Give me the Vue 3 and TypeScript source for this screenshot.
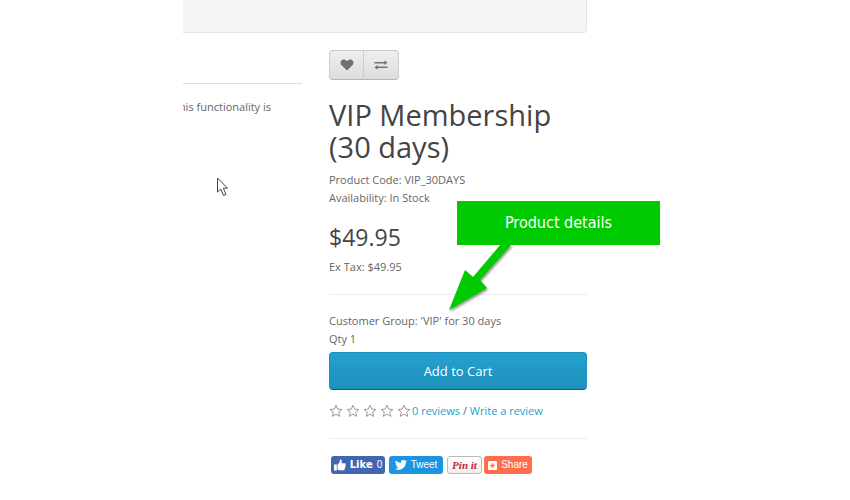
<script setup lang="ts">
import { ref } from 'vue'

const product = {
  name: 'VIP Membership (30 days)',
  code: 'VIP_30DAYS',
  availability: 'In Stock',
  price: '$49.95',
  exTax: '$49.95',
  group: "'VIP' for 30 days",
  reviews: 0,
}

const likes = ref(0)
const starPath =
  'M7 1.2 8.7 5.1 12.9 5.5 9.7 8.2 10.7 12.4 7 10.2 3.3 12.4 4.3 8.2 1.1 5.5 5.3 5.1Z'
</script>

<template>
  <main class="page">
    <div class="panel"></div>
    <div class="columns">
      <section class="description">
        <div class="tabs"></div>
        <p class="excerpt"><span>his functionality is</span></p>
      </section>

      <section class="product">
        <div class="tools">
          <button type="button" class="tool" aria-label="Add to Wish List">
            <svg width="14" height="12" viewBox="0 0 14 12">
              <path fill="#707070" d="M7 11.5 1.6 6.3C.2 4.8.2 2.6 1.4 1.4 2.9 0 5.6.3 7 2.4 8.4.3 11.1 0 12.6 1.4 13.8 2.6 13.8 4.800 12.400 6.300Z" />
            </svg>
          </button>
          <button type="button" class="tool" aria-label="Compare this Product">
            <svg width="14" height="10" viewBox="0 0 14 10">
              <path fill="#707070" d="M.5 2H10.500V.2L13.500 2.700 10.500 5V3.400H.5ZM13.500 6.600H3.500V5L.5 7.400 3.500 9.800V8H13.500Z" />
            </svg>
          </button>
        </div>

        <h1>{{ product.name }}</h1>
        <ul class="facts">
          <li>Product Code: {{ product.code }}</li>
          <li>Availability: {{ product.availability }}</li>
        </ul>
        <h2>{{ product.price }}</h2>
        <p class="tax">Ex Tax: {{ product.exTax }}</p>
        <hr />
        <p>Customer Group: {{ product.group }}</p>
        <p>Qty 1</p>
        <button type="button" class="cart">Add to Cart</button>

        <div class="rating">
          <span class="stars">
            <svg v-for="n in 5" :key="n" width="14" height="14" viewBox="0 0 14 14">
              <path :d="starPath" fill="#fff" stroke="#999" stroke-width="1" stroke-linejoin="round" />
            </svg>
          </span>
          <span><a href="#reviews">{{ product.reviews }} reviews</a> / <a href="#write">Write a review</a></span>
        </div>
        <hr />

        <div class="share">
          <button type="button" class="social like" @click="likes++">
            <svg width="12" height="12" viewBox="0 0 12 12">
              <path fill="#fff" d="M0 5.500H2.800V11.500H0ZM3.500 5.700 5.600 3.200 6 .5C7.400.2 8.200 1.300 7.600 4.300H10.800C12 4.400 12 5.700 11.300 6.100 12 6.700 11.800 7.700 11 8 11.500 8.700 11.200 9.400 10.500 9.700 10.800 10.700 10.200 11.300 9.300 11.300H5.500L3.500 10.600Z" />
            </svg>
            <strong>Like</strong><span>{{ likes }}</span>
          </button>
          <button type="button" class="social tweet">
            <svg width="12" height="10" viewBox="0 0 24 20">
              <path fill="#fff" d="M24 2.400a10 10 0 0 1-2.800.8A5 5 0 0 0 23.300.5a10 10 0 0 1-3.100 1.200 4.900 4.900 0 0 0-8.400 4.500A14 14 0 0 1 1.700 1 4.900 4.900 0 0 0 3.200 7.600 5 5 0 0 1 1 7a4.900 4.900 0 0 0 3.900 4.800 5 5 0 0 1-2.200.1 4.900 4.900 0 0 0 4.600 3.400A10 10 0 0 1 0 17.300 14 14 0 0 0 21.500 4.900 10 10 0 0 0 24 2.400Z" />
            </svg>
            <span>Tweet</span>
          </button>
          <span class="pair">
            <button type="button" class="social pin">Pin it</button>
            <button type="button" class="social addthis">
              <svg width="9" height="9" viewBox="0 0 10 10">
                <rect width="10" height="10" rx="1" fill="#fff" />
                <path d="M5 2.500V7.500M2.500 5H7.500" stroke="#ff6d4d" stroke-width="1.600" />
              </svg>
              <span>Share</span>
            </button>
          </span>
        </div>
      </section>
    </div>

    <div class="callout">Product details</div>
    <svg class="arrow" width="70" height="74" viewBox="0 0 70 74">
      <path d="M56 0H67L35 36 42 44 4 66 20 26 28 33Z" fill="#00ca00" />
    </svg>
    <svg class="pointer" width="13" height="20" viewBox="0 0 13 20">
      <path d="M1.500 1V15L4.700 12 7.500 18.500 10 17.400 7.300 11.200H11.500Z" fill="#fff" stroke="#444" stroke-width="1" />
    </svg>
  </main>
</template>

<style>
body {
  margin: 0;
  background: #fff;
}
</style>

<style scoped>
.page {
  position: relative;
  box-sizing: border-box;
  padding: 0 263px 0 183px;
  font: 11px/18px "Open Sans", "Noto Sans", sans-serif;
  color: #666;
}
.panel {
  height: 32px;
  background: #f4f4f4;
  border: solid #e2e2e2;
  border-width: 0 1px 1px 0;
  border-bottom-right-radius: 4px;
}
.columns {
  display: grid;
  grid-template-columns: minmax(0, 119fr) minmax(0, 258fr);
  column-gap: 27px;
}
.tabs {
  height: 50px;
  border-bottom: 1px solid #ddd;
}
p {
  margin: 0;
}
.excerpt {
  display: flex;
  justify-content: flex-end;
  width: 88px;
  margin-top: 14px;
  overflow: hidden;
  white-space: nowrap;
}
.excerpt span {
  flex: none;
}
.product {
  padding-top: 17px;
}
.tools {
  display: flex;
}
.tool {
  display: flex;
  align-items: center;
  justify-content: center;
  box-sizing: border-box;
  width: 35px;
  height: 30px;
  padding: 0;
  border: 1px solid #ccc;
  border-bottom-color: #b3b3b3;
  border-radius: 4px 0 0 4px;
  background: linear-gradient(#eee, #ddd);
}
.tool + .tool {
  border-left: 0;
  border-radius: 0 4px 4px 0;
}
h1 {
  margin: 19px 0 8px;
  font-size: 29px;
  line-height: 32px;
  font-weight: 400;
  color: #444;
}
.facts {
  margin: 0;
  padding: 0;
  list-style: none;
}
h2 {
  margin: 17px 0 8px;
  font-size: 23px;
  line-height: 26px;
  font-weight: 400;
  color: #444;
}
hr {
  margin: 18px 0 17px;
  border: 0;
  border-top: 1px solid #eee;
}
.cart {
  display: block;
  width: 100%;
  height: 38px;
  margin: 4px 0 12px;
  border: 1px solid #1f90bb;
  border-bottom-color: #145e7a;
  border-radius: 4px;
  background: linear-gradient(#23a1d1, #1f90bb);
  color: #fff;
  font: 13px/18px "Open Sans", "Noto Sans", sans-serif;
}
.rating {
  display: flex;
  gap: 1px;
  white-space: nowrap;
}
.stars {
  display: flex;
  align-items: center;
  gap: 3px;
}
a {
  color: #23a1d1;
  text-decoration: none;
}
.share {
  display: flex;
  gap: 4px;
  padding-left: 2px;
}
.pair {
  display: flex;
  gap: 2px;
}
.social {
  display: flex;
  align-items: center;
  justify-content: center;
  gap: 4px;
  box-sizing: border-box;
  height: 18px;
  padding: 0;
  border: 0;
  border-radius: 3px;
  color: #fff;
  font: 10px/18px "Liberation Sans", sans-serif;
  white-space: nowrap;
}
.social svg {
  flex: none;
}
.like {
  width: 54px;
  background: #4267b2;
}
.like strong {
  font-family: "DejaVu Sans", sans-serif;
}
.tweet {
  width: 54px;
  background: #1b95e0;
}
.pin {
  width: 35px;
  border: 1px solid #bbb;
  background: linear-gradient(#fff, #eee);
  color: #c2283a;
  font: italic bold 11px/16px "Liberation Serif", serif;
}
.addthis {
  width: 48px;
  background: #ff6d4d;
}
.callout {
  position: absolute;
  top: 201px;
  left: 457px;
  width: 203px;
  background: #00ca00;
  color: #fff;
  font: 16px/44px "DejaVu Sans Condensed", "DejaVu Sans", sans-serif;
  text-align: center;
}
.arrow {
  position: absolute;
  top: 244px;
  left: 445px;
  filter: drop-shadow(1px 2px 1px rgba(0, 0, 0, 0.4));
}
.pointer {
  position: absolute;
  top: 177px;
  left: 216px;
}
</style>
